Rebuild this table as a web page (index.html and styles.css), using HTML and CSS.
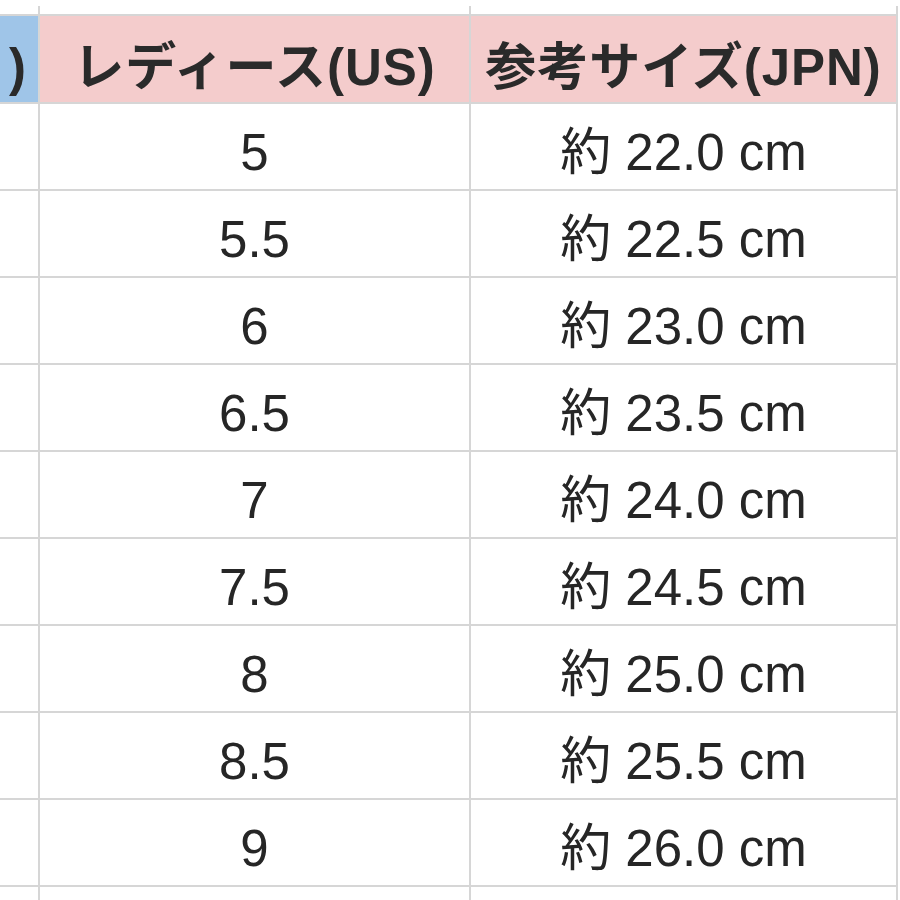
FILE: index.html
```html
<!DOCTYPE html>
<html lang="ja">
<head>
<meta charset="utf-8">
<title>サイズ表</title>
<link rel="stylesheet" href="styles.css">
</head>
<body>
<div class="sheet">
  <div class="cell top"></div><div class="cell top"></div><div class="cell top"></div>

  <div class="cell head blue edge">)</div>
  <div class="cell head pink">レディース(US)</div>
  <div class="cell head pink">参考サイズ(JPN)</div>

  <div class="cell"></div><div class="cell">5</div><div class="cell">約 22.0 cm</div>
  <div class="cell"></div><div class="cell">5.5</div><div class="cell">約 22.5 cm</div>
  <div class="cell"></div><div class="cell">6</div><div class="cell">約 23.0 cm</div>
  <div class="cell"></div><div class="cell">6.5</div><div class="cell">約 23.5 cm</div>
  <div class="cell"></div><div class="cell">7</div><div class="cell">約 24.0 cm</div>
  <div class="cell"></div><div class="cell">7.5</div><div class="cell">約 24.5 cm</div>
  <div class="cell"></div><div class="cell">8</div><div class="cell">約 25.0 cm</div>
  <div class="cell"></div><div class="cell">8.5</div><div class="cell">約 25.5 cm</div>
  <div class="cell"></div><div class="cell">9</div><div class="cell">約 26.0 cm</div>

  <div class="cell"></div><div class="cell"></div><div class="cell"></div>
</div>
</body>
</html>
```

FILE: styles.css
```css
html, body {
  margin: 0;
  padding: 0;
  background: #ffffff;
  overflow: hidden;
  height: 900px;
}

.sheet {
  margin-top: 6px;
  width: 896px;
  display: grid;
  grid-template-columns: 38px 429px 425px;
  grid-template-rows: 8px 86px repeat(9, 85px) 40px;
  gap: 2px;
  padding-right: 2px;
  background: #d6d6d6;
  font-family: "Liberation Sans", "Noto Sans CJK JP", sans-serif;
  font-size: 51px;
  line-height: 51px;
  color: #262626;
}

.cell {
  background: #ffffff;
  display: flex;
  align-items: flex-end;
  justify-content: center;
  padding-bottom: 11px;
  overflow: hidden;
  white-space: nowrap;
  box-sizing: border-box;
}

.top {
  padding-bottom: 0;
}

.head {
  font-weight: bold;
  color: #2a2a2a;
  padding-bottom: 9px;
  letter-spacing: 1px;
}

.blue {
  background: #9fc5e8;
}

.pink {
  background: #f4cccc;
}

.edge {
  justify-content: flex-end;
  padding-right: 12px;
  letter-spacing: 0;
}
```
